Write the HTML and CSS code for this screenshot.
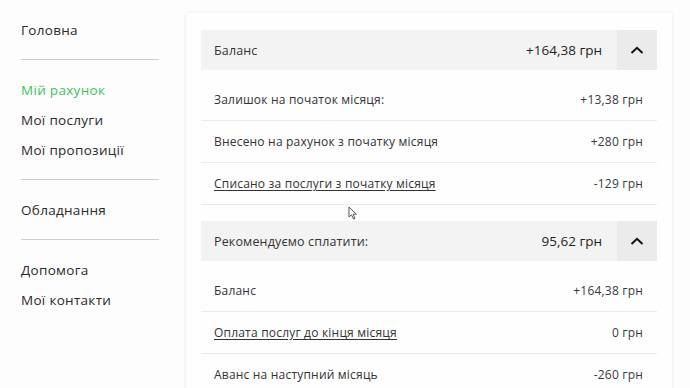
FILE: index.html
```html
<!DOCTYPE html>
<html lang="uk">
<head>
<meta charset="utf-8">
<link rel="stylesheet" href="styles.css">
</head>
<body>
<div class="layout">
  <nav class="sidebar">
    <a class="nav-item">Головна</a>
    <div class="divider"></div>
    <a class="nav-item active">Мій рахунок</a>
    <a class="nav-item">Мої послуги</a>
    <a class="nav-item">Мої пропозиції</a>
    <div class="divider"></div>
    <a class="nav-item">Обладнання</a>
    <div class="divider"></div>
    <a class="nav-item">Допомога</a>
    <a class="nav-item">Мої контакти</a>
  </nav>
  <main class="card">
    <section class="section">
      <div class="section-head">
        <span class="head-label">Баланс</span>
        <span class="head-value">+164,38 грн</span>
        <button class="toggle"><svg width="14" height="8" viewBox="0 0 14 8"><path d="M1.5 7 L7 1.8 L12.5 7" fill="none" stroke="#111" stroke-width="2"/></svg></button>
      </div>
      <div class="rows">
        <div class="row"><span>Залишок на початок місяця:</span><span class="val">+13,38 грн</span></div>
        <div class="row"><span>Внесено на рахунок з початку місяця</span><span class="val">+280 грн</span></div>
        <div class="row"><span class="link">Списано за послуги з початку місяця</span><span class="val">-129 грн</span></div>
      </div>
    </section>
    <section class="section">
      <div class="section-head">
        <span class="head-label">Рекомендуємо сплатити:</span>
        <span class="head-value">95,62 грн</span>
        <button class="toggle"><svg width="14" height="8" viewBox="0 0 14 8"><path d="M1.5 7 L7 1.8 L12.5 7" fill="none" stroke="#111" stroke-width="2"/></svg></button>
      </div>
      <div class="rows">
        <div class="row"><span>Баланс</span><span class="val">+164,38 грн</span></div>
        <div class="row"><span class="link">Оплата послуг до кінця місяця</span><span class="val">0 грн</span></div>
        <div class="row"><span>Аванс на наступний місяць</span><span class="val">-260 грн</span></div>
      </div>
    </section>
    <svg class="cursor" width="10" height="14" viewBox="0 0 10 14"><path d="M1 1 L1 11 L3.5 8.8 L5.5 13 L7 12.3 L5.1 8.2 L8.4 8.2 Z" fill="#fff" stroke="#555" stroke-width="1"/></svg>
  </main>
</div>
</body>
</html>
```
FILE: styles.css
```css
html, body {
  margin: 0;
  padding: 0;
  background: #fdfdfd;
  font-family: "Open Sans", "Noto Sans", sans-serif;
  color: #2b2b2b;
}
.layout {
  display: flex;
  align-items: flex-start;
  height: 388px;
  overflow: hidden;
}
.sidebar {
  width: 165px;
  padding: 15px 0 0 21px;
  display: flex;
  flex-direction: column;
}
.nav-item {
  display: block;
  height: 30px;
  line-height: 30px;
  font-size: 13.5px;
  color: #2a2a2a;
  letter-spacing: 0.3px;
}
.nav-item.active {
  color: #3fc35f;
}
.divider {
  width: 138px;
  height: 1px;
  background: #cfcfcf;
  margin: 14px 0 15px;
}
.card {
  position: relative;
  width: 456px;
  margin-top: 13px;
  padding: 17px 15px 0;
  background: #fefefe;
  box-shadow: 0 0 4px rgba(0,0,0,0.08);
  height: 400px;
}
.section {
  margin-bottom: 16px;
}
.section-head {
  display: flex;
  align-items: center;
  height: 40px;
  background: #f3f3f3;
  padding-left: 13px;
}
.head-label {
  flex: 1;
  font-size: 12.5px;
  color: #333;
  letter-spacing: 0.15px;
}
.head-value {
  font-size: 13.5px;
  font-weight: 500;
  color: #1f1f1f;
  margin-right: 15px;
}
.toggle {
  width: 40px;
  height: 40px;
  border: 0;
  padding: 0;
  background: #ebebeb;
  display: flex;
  align-items: center;
  justify-content: center;
}
.rows {
  margin-top: 9px;
}
.row {
  display: flex;
  justify-content: space-between;
  align-items: center;
  height: 41px;
  padding: 0 14px 0 13px;
  border-bottom: 1px solid #ececec;
  font-size: 12px;
  letter-spacing: 0.2px;
  color: #333;
}
.row .val {
  color: #3a3a3a;
}
.link {
  text-decoration: underline;
  text-underline-offset: 2px;
}
.cursor {
  position: absolute;
  left: 162px;
  top: 193px;
}
```
